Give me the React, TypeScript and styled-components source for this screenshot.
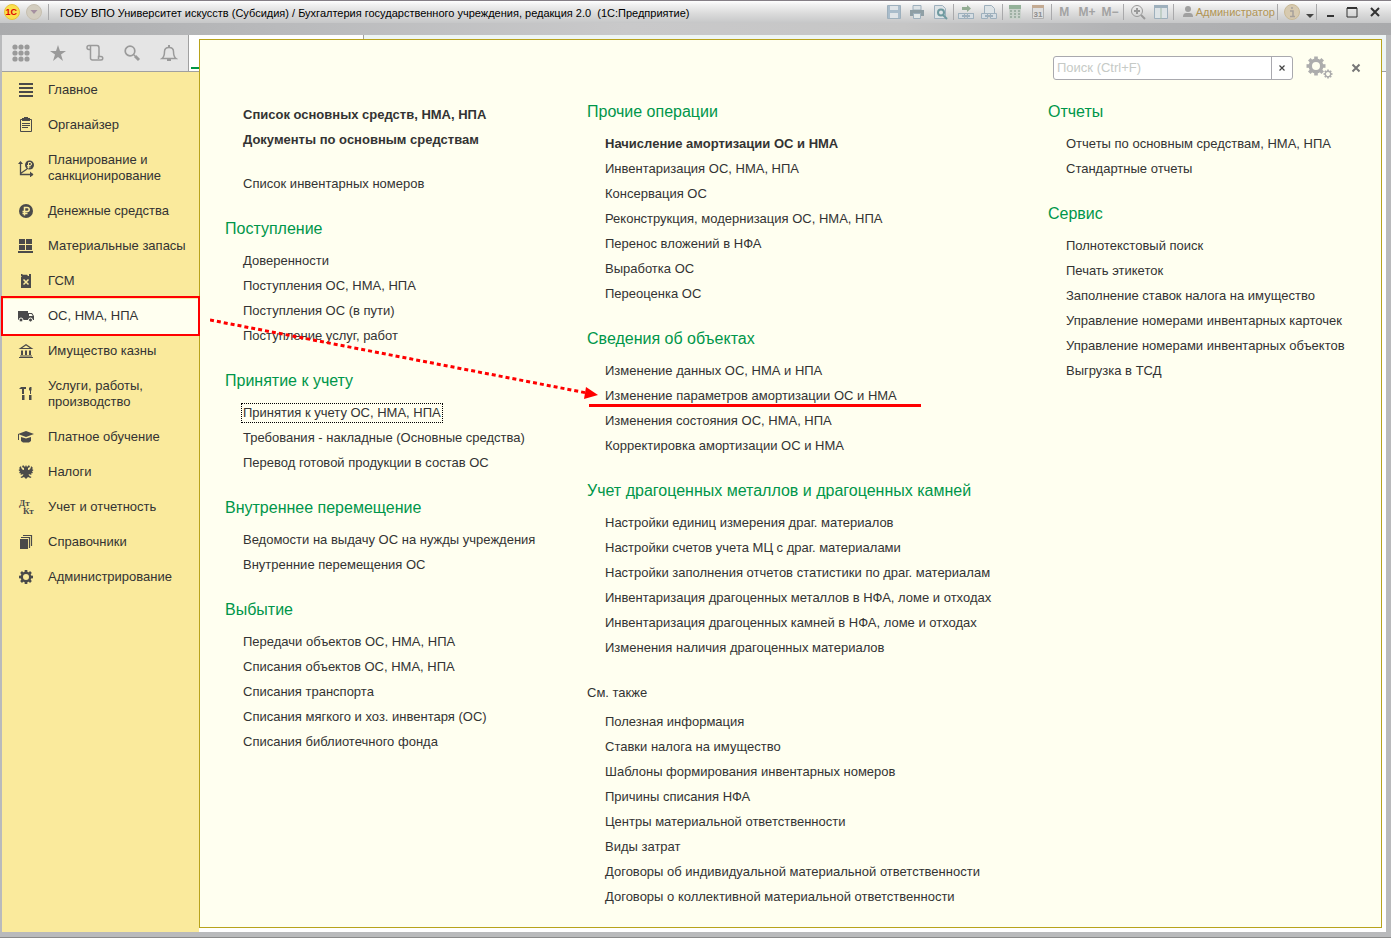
import React from 'react';
import styled, { createGlobalStyle, css } from 'styled-components';

const Global = createGlobalStyle`
  * { box-sizing: border-box; }
  html, body, #root { height: 100%; }
  body { margin: 0; font-family: "Liberation Sans", Arial, sans-serif; font-size: 13px; line-height: 16px; color: #333; background: #b9babc; }
  a { color: inherit; text-decoration: none; }
  button { border: 0; padding: 0; background: none; font: inherit; color: inherit; cursor: pointer; }
  svg { display: block; }
`;

const Window = styled.div`
  min-height: 100vh;
  display: flex;
  flex-direction: column;
  border-top: 1px solid #857f86;
  border-bottom: 1px solid #8a8a8a;
`;

const TitleBar = styled.header`
  height: 22px;
  padding: 0 5px 0 3px;
  display: flex;
  align-items: center;
  background: linear-gradient(#fff 0, #f0f0f0 4px, #dcdcdc 12px, #c6c7c8 22px);
`;

const Title = styled.h1`
  flex: 1;
  margin: 0;
  padding: 2px 0 0 10px;
  font-size: 11px;
  line-height: 16px;
  font-weight: 400;
  color: #000;
  white-space: pre;
  overflow: hidden;
`;

const Sep = styled.span`
  width: 1px;
  height: 16px;
  margin: 0 1px;
  background: #a9a9ab;
`;

const BarButton = styled.button<{ $w?: number }>`
  width: ${p => p.$w ?? 23}px;
  height: 20px;
  display: flex;
  align-items: center;
  justify-content: center;
  color: #a3a3a3;
  font-size: 12px;
  font-weight: 700;
`;

const User = styled.button`
  padding: 0 1px 0 8px;
  display: flex;
  align-items: center;
  gap: 3px;
  color: #b19555;
  font-size: 11px;
`;

const Band = styled.div`
  height: 12px;
  background: linear-gradient(90deg, #aaabad 0, #b9babc 20%, #c9c9ca 45%, #c6c6c6 65%, #b2b3b5 80%, #a9aaac 100%);
`;

const Body = styled.div`
  flex: 1;
  display: flex;
  margin: 0 5px 5px 2px;
`;

const Side = styled.aside`
  width: 197px;
  flex: none;
  display: flex;
  flex-direction: column;
  background: #faea9c;
`;

const Tools = styled.div`
  height: 37px;
  display: flex;
  background: #fff;
  border-bottom: 1px solid #a0a0a0;
`;

const ToolStrip = styled.div`
  display: flex;
  flex: 1;
  background: #e5e5e5;
  border-right: 1px solid #a0a0a0;
`;

const OpenTab = styled.div`
  width: 8px;
  margin: 0 0 2px 2px;
  border-bottom: 2px solid #009646;
`;

const ToolButton = styled.button`
  width: 37px;
  height: 36px;
  display: flex;
  align-items: center;
  justify-content: center;
`;

const Nav = styled.nav`
  padding-top: 1px;
`;

const NavLink = styled.a<{ $active?: boolean }>`
  position: relative;
  min-height: 35px;
  padding: 9px 4px 10px 14px;
  display: flex;
  align-items: center;
  gap: 12px;
  white-space: pre-line;
  svg { flex: none; }
  ${p => p.$active && css`
    background: #fffff0;
    &::after {
      content: "";
      position: absolute;
      inset: -3px -1px -2px;
      border: 2px solid #f00;
      z-index: 1;
    }
  `}
`;

const Main = styled.main`
  flex: 1;
  min-width: 0;
  display: flex;
  padding: 4px 4px 4px 0;
  background:
    linear-gradient(#a0a0a0, #a0a0a0) 164px 0 / 1px 4px no-repeat,
    linear-gradient(#fff, #fff) 0 0 / 164px 4px no-repeat,
    linear-gradient(#eef5f4 0, #eef5f4 36px, #a0a0a0 36px, #a0a0a0 37px, #fff 37px);
`;

const Panel = styled.section`
  position: relative;
  flex: 1;
  min-width: 0;
  border: 1px solid #b8a31c;
  background: #fffff0;
`;

const PanelHead = styled.div`
  height: 60px;
  padding: 16px 13px 0 0;
  display: flex;
  justify-content: flex-end;
  align-items: flex-start;
`;

const Search = styled.form`
  width: 240px;
  height: 24px;
  display: flex;
  border: 1px solid #a9a9ae;
  border-radius: 3px;
  background: #fff;
  overflow: hidden;
  input {
    flex: 1;
    min-width: 0;
    border: 0;
    padding: 0 3px;
    outline: 0;
    background: none;
    font: inherit;
  }
  input::placeholder { color: #c6cac6; opacity: 1; }
  button { width: 21px; border-left: 1px solid #a9a9ae; display: flex; align-items: center; justify-content: center; }
`;

const HeadButton = styled.button<{ $w: number }>`
  width: ${p => p.$w}px;
  height: 24px;
  display: flex;
  align-items: center;
  justify-content: center;
`;

const Columns = styled.div`
  display: grid;
  grid-template-columns: 362fr 461fr 333fr;
  padding: 0 0 18px 25px;
`;

const Column = styled.div<{ $top: number }>`
  padding-top: ${p => p.$top}px;
`;

const Group = styled.section<{ $gap?: number }>`
  margin-bottom: ${p => p.$gap ?? 21}px;
  &:last-child { margin-bottom: 0; }
`;

const Heading = styled.h2<{ $plain?: boolean }>`
  margin: 0 0 ${p => (p.$plain ? 4 : 7)}px;
  font-size: ${p => (p.$plain ? 13 : 16)}px;
  line-height: 24px;
  font-weight: 400;
  color: ${p => (p.$plain ? '#333' : '#00964a')};
  white-space: nowrap;
`;

const List = styled.ul`
  margin: 0;
  padding: 0 0 0 18px;
  list-style: none;
`;

const Item = styled.li`
  height: 25px;
  display: flex;
  align-items: center;
  white-space: nowrap;
`;

const ItemLink = styled.a<{ $bold?: boolean; $focus?: boolean; $marked?: boolean }>`
  position: relative;
  font-weight: ${p => (p.$bold ? 700 : 400)};
  ${p => p.$focus && css`outline: 1px dotted #000; outline-offset: 1px;`}
  ${p => p.$marked && css`
    &::after {
      content: "";
      position: absolute;
      left: -16px;
      right: -24px;
      bottom: -3px;
      height: 3px;
      background: #f00;
    }
  `}
`;

const Arrow = styled.svg`
  position: absolute;
  left: 10px;
  top: 276px;
  pointer-events: none;
`;

const D = '#4a4a4a';

const S = ({ children, w = 16, h = 16 }: { children: React.ReactNode; w?: number; h?: number }) => (
  <svg width={w} height={h} viewBox={`0 0 ${w} ${h}`} fill="none" aria-hidden="true">{children}</svg>
);

const Gear = ({ x, y, r, hole, color }: { x: number; y: number; r: number; hole: number; color: string }) => (
  <g transform={`translate(${x} ${y})`}>
    <circle r={(r * 0.78 + hole) / 2} stroke={color} strokeWidth={r * 0.78 - hole} fill="none" />
    {[0, 45, 90, 135, 180, 225, 270, 315].map(a => (
      <rect key={a} x={-r * 0.19} y={-r} width={r * 0.38} height={r * 0.36} fill={color} transform={`rotate(${a})`} />
    ))}
  </g>
);

const icons: Record<string, React.ReactNode> = {
  menu: <S w={20}><path d="M3 2h14M3 6h14M3 10h14M3 14h14" stroke={D} strokeWidth="2" /></S>,
  board: <S w={20}><path d="M4.500 2.500h11v12h-11z" stroke={D} /><path d="M6 1h2V0h4v1h2v3H6z" fill={D} /><path d="M6 6.500h8M6 8.500h8M6 10.500h6" stroke={D} /></S>,
  plan: <S w={20} h={18}><path d="M4.500 3v12.500H17M4.500 14.500L11 10" stroke={D} strokeWidth="1.300" /><path d="M2 5l2.500-3L7 5zM14 12.500l3.500 3-3.500 3z" fill={D} /><circle cx="13.500" cy="6" r="4.500" fill={D} /><path d="M12.500 9.500V3.500H14a1.500 1.500 0 010 3h-3M11 8h3.500" stroke="#faea9c" /></S>,
  coin: <S w={20}><circle cx="10" cy="8" r="7" fill={D} /><path d="M8.500 12.500V4.500h2.700a2 2 0 010 4H6.500M6.500 10.500h5" stroke="#faea9c" strokeWidth="1.500" /></S>,
  stock: <S w={20}><path d="M3 1h6v5H3zM10 1h6v5h-6zM3 7h6v5H3zM10 7h6v5h-6zM2 13h15v2H2z" fill={D} /></S>,
  can: <S w={20}><path d="M5 4l1-1h9v12H5zM5 1h1l1 .800h4l1 1.200H8L5 3zM13 1h2v2h-2z" fill={D} /><path d="M7.500 6.500l5 5M12.500 6.500l-5 5" stroke="#faea9c" strokeWidth="1.500" /></S>,
  truck: <S w={20}><path d="M2 3h10v9H2zM12 5h4l2 3v4h-6z" fill={D} /><path d="M13 6h2.500l1.300 2H13z" fill="#fffff0" /><circle cx="5" cy="12" r="2" fill={D} stroke="#fffff0" /><circle cx="14.500" cy="12" r="2" fill={D} stroke="#fffff0" /></S>,
  bank: <S w={20}><path d="M4.500 5.500L10 1.700l5.500 3.800z" stroke={D} strokeWidth="1.200" /><path d="M5 7.500h2v4.500H5zM9 7.500h2v4.500H9zM13 7.500h2v4.500h-2zM4 12.500h12v1H4zM3 14h14v1H3z" fill={D} /></S>,
  tools: <S w={20} h={18}><path d="M3 4l2-2h5v2H8v5H6V4zM6 10h2.500v5H6zM14 2h1.500v3L15 6v3h-1V6l-1-1V3zM13 10h2.500v5H13z" fill={D} /></S>,
  cap: <S w={20}><path d="M10 2l8 3-8 3-8-3zM5 8l5 1.500L15 8v4l-2 1.500H7L5 12z" fill={D} /><path d="M2.500 5v6" stroke={D} /></S>,
  eagle: <S w={20}><path d="M9 3L7 1 6 3l2 1v2C6 6 5 4 5 2L3 4l1 1-1.500 1L4 7.500 3 9l2 .500L4.500 11l3-1-1 2-2 1 1 1 2.500-1 2 2 2-2 2.500 1 1-1-2-1-1-2 3 1-.500-1.500 2-.500-1-1.500L17.500 6 16 5l1-1-2-2c0 2-1 4-3 4V4l2-1-1-2-2 2-1-2z" fill={D} /></S>,
  ledger: <S w={20}><text x="3" y="7" fontSize="9" fontFamily="Liberation Serif, serif" fontWeight="700" fill={D}>Дт</text><text x="7" y="15" fontSize="9" fontFamily="Liberation Serif, serif" fontWeight="700" fill={D}>Кт</text></S>,
  books: <S w={20}><path d="M4 5h8v10H4z" fill={D} /><path d="M5 3.500h8.500V14M7 1.500h8.500V12" stroke={D} strokeWidth="1.200" /></S>,
  gear: <S w={20}><Gear x={10} y={8} r={7} hole={3} color={D} /></S>,
};

const nav: [string, string][] = [
  ['menu', 'Главное'], ['board', 'Органайзер'], ['plan', 'Планирование и\nсанкционирование'],
  ['coin', 'Денежные средства'], ['stock', 'Материальные запасы'], ['can', 'ГСМ'],
  ['truck', 'ОС, НМА, НПА'], ['bank', 'Имущество казны'], ['tools', 'Услуги, работы,\nпроизводство'],
  ['cap', 'Платное обучение'], ['eagle', 'Налоги'], ['ledger', 'Учет и отчетность'],
  ['books', 'Справочники'], ['gear', 'Администрирование'],
];

type EntryData = { text: string; bold?: boolean; focus?: boolean; marked?: boolean };
type Entry = string | EntryData;
type Section = { title?: string; plain?: boolean; gap?: number; items: Entry[] };

const columns: Section[][] = [
  [
    { gap: 19, items: [{ text: 'Список основных средств, НМА, НПА', bold: true }, { text: 'Документы по основным средствам', bold: true }] },
    { items: ['Список инвентарных номеров'] },
    { title: 'Поступление', items: ['Доверенности', 'Поступления ОС, НМА, НПА', 'Поступления ОС (в пути)', 'Поступление услуг, работ'] },
    { title: 'Принятие к учету', items: [{ text: 'Принятия к учету ОС, НМА, НПА', focus: true }, 'Требования - накладные (Основные средства)', 'Перевод готовой продукции в состав ОС'] },
    { title: 'Внутреннее перемещение', items: ['Ведомости на выдачу ОС на нужды учреждения', 'Внутренние перемещения ОС'] },
    { title: 'Выбытие', items: ['Передачи объектов ОС, НМА, НПА', 'Списания объектов ОС, НМА, НПА', 'Списания транспорта', 'Списания мягкого и хоз. инвентаря (ОС)', 'Списания библиотечного фонда'] },
  ],
  [
    { title: 'Прочие операции', items: [{ text: 'Начисление амортизации ОС и НМА', bold: true }, 'Инвентаризация ОС, НМА, НПА', 'Консервация ОС', 'Реконструкция, модернизация ОС, НМА, НПА', 'Перенос вложений в НФА', 'Выработка ОС', 'Переоценка ОС'] },
    { title: 'Сведения об объектах', items: ['Изменение данных ОС, НМА и НПА', { text: 'Изменение параметров амортизации ОС и НМА', marked: true }, 'Изменения состояния ОС, НМА, НПА', 'Корректировка амортизации ОС и НМА'] },
    { title: 'Учет драгоценных металлов и драгоценных камней', items: ['Настройки единиц измерения драг. материалов', 'Настройки счетов учета МЦ с драг. материалами', 'Настройки заполнения отчетов статистики по драг. материалам', 'Инвентаризация драгоценных металлов в НФА, ломе и отходах', 'Инвентаризация драгоценных камней в НФА, ломе и отходах', 'Изменения наличия драгоценных материалов'] },
    { title: 'См. также', plain: true, items: ['Полезная информация', 'Ставки налога на имущество', 'Шаблоны формирования инвентарных номеров', 'Причины списания НФА', 'Центры материальной ответственности', 'Виды затрат', 'Договоры об индивидуальной материальной ответственности', 'Договоры о коллективной материальной ответственности'] },
  ],
  [
    { title: 'Отчеты', items: ['Отчеты по основным средствам, НМА, НПА', 'Стандартные отчеты'] },
    { title: 'Сервис', items: ['Полнотекстовый поиск', 'Печать этикеток', 'Заполнение ставок налога на имущество', 'Управление номерами инвентарных карточек', 'Управление номерами инвентарных объектов', 'Выгрузка в ТСД'] },
  ],
];

const G = '#9a9a9a';
const B = '#9eb0bd';

export default function App() {
  return (
    <>
      <Global />
      <Window>
        <TitleBar>
          <BarButton $w={18} aria-label="1С">
            <S w={16}><circle cx="8" cy="8" r="7.500" fill="#fbe04d" stroke="#e8c33a" /><text x="1.500" y="11" fontSize="9" fontWeight="700" fill="#d00">1С</text></S>
          </BarButton>
          <BarButton $w={26} aria-label="Меню">
            <S w={16}><circle cx="8" cy="8" r="7.500" fill="#d3cdbf" stroke="#c6bfb0" /><path d="M4.500 6h7L8 10z" fill="#a590a0" /></S>
          </BarButton>
          <Sep />
          <Title>ГОБУ ВПО Университет искусств (Субсидия) / Бухгалтерия государственного учреждения, редакция 2.0  (1С:Предприятие)</Title>
          <BarButton aria-label="Сохранить"><S><path d="M1.500 1.500h13v13h-13z" fill="#a9bccb" stroke={B} /><path d="M4 2h8v4H4zM4 9h8v5H4z" fill="#dfe4e8" /></S></BarButton>
          <BarButton aria-label="Печать"><S><path d="M4 1.500h8V6H4z" fill="#dde3e6" stroke={B} /><path d="M1 6h14v6H1z" fill="#8f9fa5" /><path d="M4.500 9.500h7v5h-7z" fill="#e2e8e8" stroke={B} /></S></BarButton>
          <BarButton aria-label="Просмотр"><S><path d="M2.500 1.500h8l3 3v10h-11z" fill="#dde3e6" stroke={B} /><circle cx="9" cy="8.500" r="3" stroke="#6f9aa0" strokeWidth="2" /><path d="M11 11l4 4" stroke="#6f9aa0" strokeWidth="2" /></S></BarButton>
          <Sep />
          <BarButton aria-label="Получить ссылку"><S><path d="M0 9.500h16M0 14.500h16" stroke={B} /><path d="M.500 9.500h6v5h-6zM9.500 9.500h6v5h-6z" fill="#d5dde3" stroke={B} /><path d="M4 12h8" stroke={B} strokeWidth="2" /><path d="M4 3h5V1l4 3.500L9 8V6H4z" fill="#93ad94" /></S></BarButton>
          <BarButton aria-label="Перейти по ссылке"><S><path d="M3.500 1.500h7l3 3v5h-10z" fill="#dde3e6" stroke={B} /><path d="M.500 9.500h6v5h-6zM9.500 9.500h6v5h-6z" fill="#d5dde3" stroke={B} /><path d="M4 12h8" stroke={B} strokeWidth="2" /></S></BarButton>
          <Sep />
          <BarButton aria-label="Калькулятор"><S><path d="M2 1h12v14H2z" fill="#c9d1cb" /><path d="M2 1h12v4H2z" fill="#94b299" /><path d="M3 7h10M3 10h10M3 13h10" stroke="#9fb0a5" strokeWidth="2" strokeDasharray="2 2" /></S></BarButton>
          <BarButton aria-label="Календарь"><S><path d="M2.500 1.500h11v13h-11z" fill="#dedede" stroke="#b0b0b0" /><path d="M2 1h12v3H2z" fill="#c4ab93" /><text x="3.500" y="12.500" fontSize="8" fill="#8c8c8c">31</text></S></BarButton>
          <Sep />
          <BarButton>M</BarButton><BarButton>M+</BarButton><BarButton>M−</BarButton>
          <Sep />
          <BarButton $w={26} aria-label="Масштаб"><S><circle cx="7" cy="7" r="5.500" stroke={G} /><path d="M7 4v6M4 7h6" stroke={G} strokeWidth="2" /><path d="M11 11l4 4" stroke={G} strokeWidth="2" /></S></BarButton>
          <BarButton $w={21} aria-label="Панели"><S><path d="M1.500 1.500h13v13h-13z" fill="#dde3e6" stroke={B} /><path d="M1 1h14v3H1z" fill={B} /><path d="M8 4v11" stroke="#a3bba8" /></S></BarButton>
          <Sep />
          <User><S w={10}><circle cx="5" cy="5" r="3" fill="#a0a0a0" /><path d="M0 13c0-4 2-4 5-4s5 0 5 4z" fill="#a0a0a0" /></S>Администратор</User>
          <Sep />
          <BarButton $w={26} aria-label="Справка"><S><circle cx="8" cy="8" r="7.500" fill="#d7cab0" stroke="#c9b996" /><path d="M6 7h3v5M6 12.500h5M7 4h2" stroke="#a6a09a" strokeWidth="1.500" /></S></BarButton>
          <BarButton $w={10} aria-label="Ещё"><S w={10}><path d="M1 10h8l-4 4z" fill="#444" /></S></BarButton>
          <Sep />
          <BarButton aria-label="Свернуть"><S><path d="M5 12h7" stroke="#333" strokeWidth="2" /></S></BarButton>
          <BarButton $w={22} aria-label="Развернуть"><S><path d="M3 4h10v9H3z" stroke="#333" /><path d="M3 4h10" stroke="#333" strokeWidth="2" /></S></BarButton>
          <BarButton aria-label="Закрыть"><S><path d="M4 4l8 8M12 4l-8 8" stroke="#333" strokeWidth="2" /></S></BarButton>
        </TitleBar>
        <Band />
        <Body>
          <Side>
            <Tools>
              <ToolStrip>
                <ToolButton aria-label="Меню функций"><S w={18} h={18}>{[3, 9, 15].map(x => [3, 9, 15].map(y => <circle key={`${x}-${y}`} cx={x} cy={y} r="2.600" fill={G} />))}</S></ToolButton>
                <ToolButton aria-label="Избранное"><S w={18} h={18}><path d="M9 1l2 6h6l-5 3.600L14 17l-5-4-5 4 2-6.400L1 7h6z" fill={G} /></S></ToolButton>
                <ToolButton aria-label="История"><S w={18} h={18}><path d="M4.500 5.500H3a1.500 1.500 0 010-4h8c1.500 0 2 1 2 2.500v8M4.500 2v11.500a2 2 0 002 2.500H15a1.700 1.700 0 100-3.500h-2.500V15" stroke={G} strokeWidth="1.500" /></S></ToolButton>
                <ToolButton aria-label="Поиск"><S w={18} h={18}><circle cx="7" cy="7" r="4.800" stroke={G} strokeWidth="1.700" /><path d="M10 10l2 2" stroke={G} strokeWidth="1.500" /><path d="M12 12l4 4" stroke={G} strokeWidth="3" /></S></ToolButton>
                <ToolButton aria-label="Оповещения"><S w={18} h={18}><path d="M2 14.500c2-1.500 2.500-3 2.500-7 0-5.500 9-5.500 9 0 0 4 .500 5.500 2.500 7z" stroke={G} strokeWidth="1.500" /><path d="M9 1v2M7 16h4" stroke={G} strokeWidth="2" /></S></ToolButton>
              </ToolStrip>
              <OpenTab />
            </Tools>
            <Nav>
              {nav.map(([icon, label]) => (
                <NavLink key={icon} href="#" $active={icon === 'truck'}>{icons[icon]}<span>{label}</span></NavLink>
              ))}
            </Nav>
          </Side>
          <Main>
            <Panel>
              <PanelHead>
                <Search onSubmit={e => e.preventDefault()}>
                  <input type="text" aria-label="Поиск" placeholder="Поиск (Ctrl+F)" />
                  <button type="button" aria-label="Очистить"><S w={8} h={8}><path d="M1.500 1.500l5 5M6.500 1.500l-5 5" stroke="#444" strokeWidth="1.200" /></S></button>
                </Search>
                <HeadButton $w={51} aria-label="Настройки"><S w={28} h={24}><Gear x={11} y={10} r={9.5} hole={4} color="#adadad" /><Gear x={23} y={18} r={4.5} hole={2} color="#adadad" /></S></HeadButton>
                <HeadButton $w={24} aria-label="Закрыть"><S w={10} h={10}><path d="M1.500 1.500l7 7M8.500 1.500l-7 7" stroke="#777" strokeWidth="2" /></S></HeadButton>
              </PanelHead>
              <Columns>
                {columns.map((sections, c) => (
                  <Column key={c} $top={sections[0].title ? 0 : 2}>
                    {sections.map((s, i) => (
                      <Group key={i} $gap={s.gap}>
                        {s.title && <Heading $plain={s.plain}>{s.title}</Heading>}
                        <List>
                          {s.items.map(it => {
                            const e: EntryData = typeof it === 'string' ? { text: it } : it;
                            return <Item key={e.text}><ItemLink href="#" $bold={e.bold} $focus={e.focus} $marked={e.marked}>{e.text}</ItemLink></Item>;
                          })}
                        </List>
                      </Group>
                    ))}
                  </Column>
                ))}
              </Columns>
              <Arrow width="390" height="90" viewBox="0 0 390 90" fill="none" aria-hidden="true">
                <path d="M0 4L377 77" stroke="#f00" strokeWidth="3" strokeDasharray="4 3" />
                <path d="M376 71l12 8-14 4z" fill="#f00" />
              </Arrow>
            </Panel>
          </Main>
        </Body>
      </Window>
    </>
  );
}
